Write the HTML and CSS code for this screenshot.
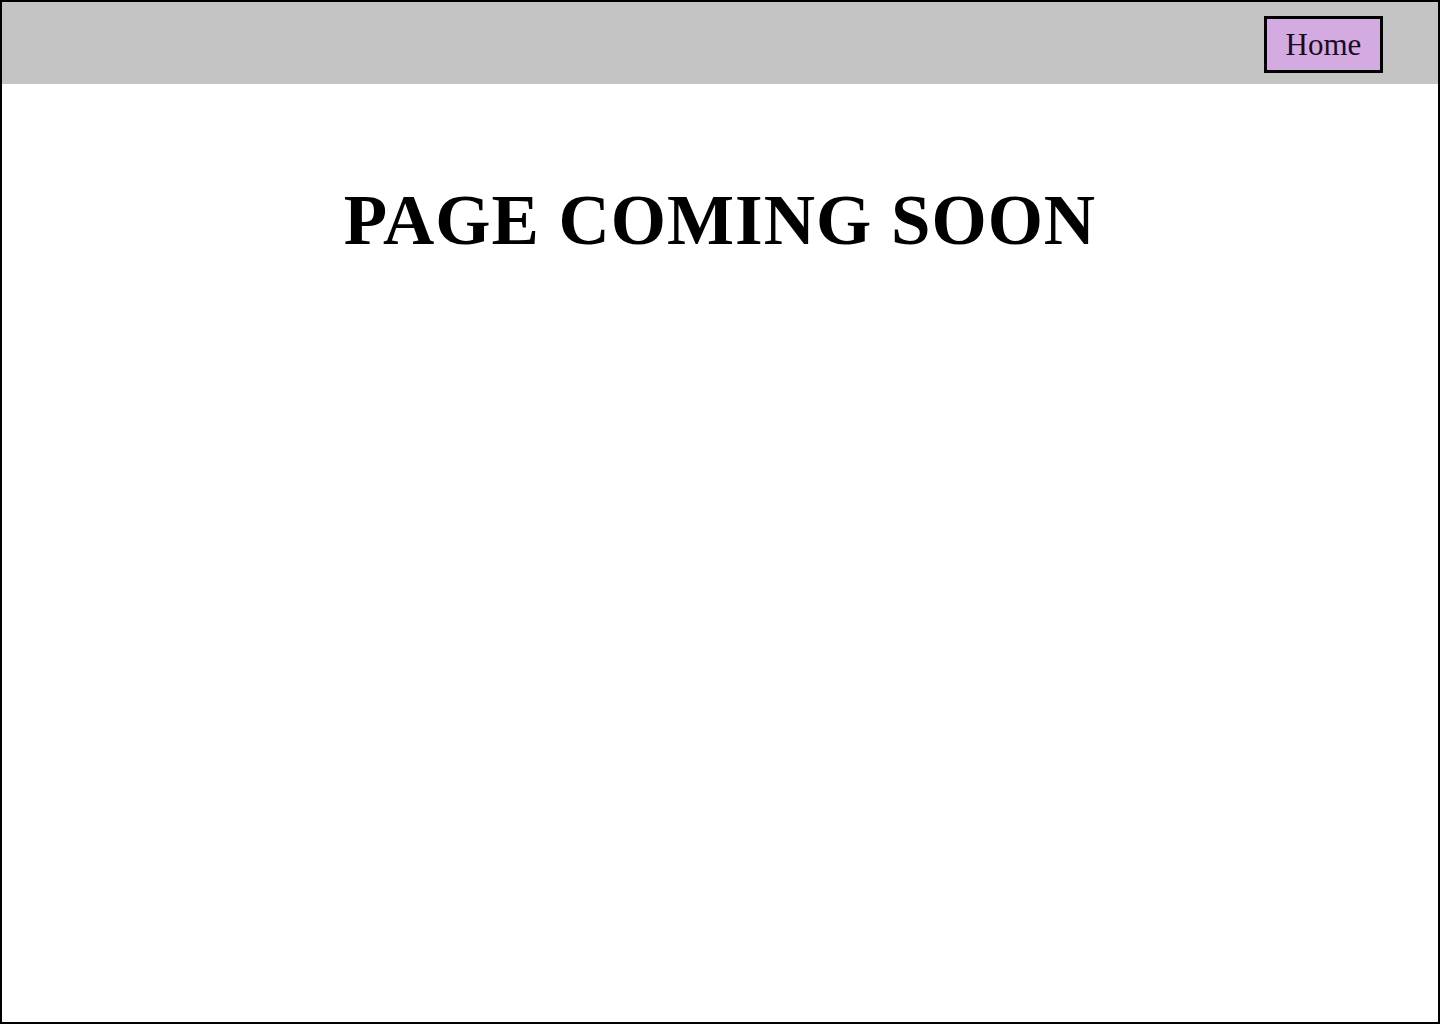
FILE: index.html
```html
<!DOCTYPE html>
<html>
<head>
<meta charset="utf-8">
<link rel="stylesheet" href="styles.css">
</head>
<body>
<div class="frame">
  <header class="topbar">
    <a class="home-btn" href="#">Home</a>
  </header>
  <main class="content">
    <h1 class="title">PAGE COMING SOON</h1>
  </main>
</div>
</body>
</html>
```
FILE: styles.css
```css
html, body {
  margin: 0;
  padding: 0;
  background: #ffffff;
}
* { box-sizing: border-box; }
.frame {
  width: 1440px;
  height: 1024px;
  border: 2px solid #000;
  display: flex;
  flex-direction: column;
  font-family: "Liberation Serif", "DejaVu Serif", serif;
}
.topbar {
  height: 82px;
  background: #c4c4c4;
  display: flex;
  justify-content: flex-end;
  align-items: flex-start;
  padding: 14px 55px 0 0;
}
.home-btn {
  display: flex;
  align-items: center;
  justify-content: center;
  width: 119px;
  height: 57px;
  border: 3px solid #000;
  background: #d4abe0;
  color: #1a0a22;
  text-decoration: none;
  font-size: 31px;
  padding-top: 1px;
}
.content {
  flex: 1;
  display: flex;
  flex-direction: column;
  align-items: center;
}
.title {
  margin: 101px 0 0;
  font-size: 71px;
  font-weight: 700;
  line-height: 1;
  color: #000;
  letter-spacing: 1px;
}
```
